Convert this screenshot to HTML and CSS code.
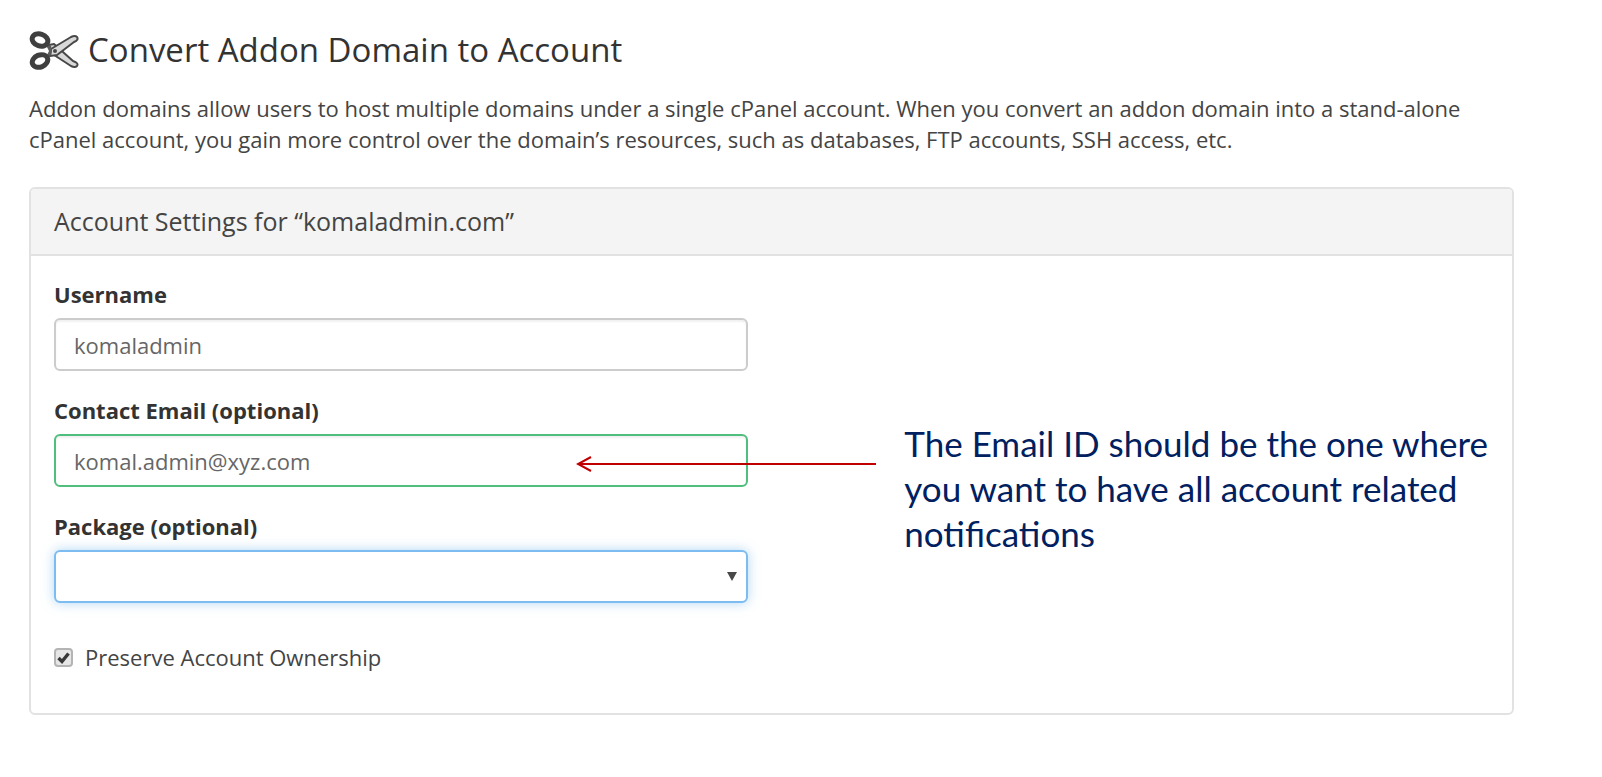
FILE: index.html
```html
<!DOCTYPE html>
<html lang="en">
<head>
    <meta charset="UTF-8">
    <meta name="viewport" content="width=device-width, initial-scale=1.0">
    <title>Convert Addon Domain to Account</title>
    <link rel="stylesheet" href="styles.css">
</head>
<body>

    <div class="page">
        <h1>
            <svg class="scissors" viewBox="0 0 50 42" aria-hidden="true">
                <path d="M20 16 L25 15 L44 32 Q50 34 48 37 Q46 39 42 37 L22 24 Z" fill="#d8d8d8" stroke="#484848" stroke-width="2" stroke-linejoin="round"/>
                <path d="M21 27 L22 20 L42 8 Q46 6 48 8 Q50 11 45 13 L28 26 Z" fill="#d8d8d8" stroke="#484848" stroke-width="2" stroke-linejoin="round"/>
                <path d="M17 16 L22 17 L23 22 L22 26 L17 28 L20 22 Z" fill="#5c5c5c"/>
                <ellipse cx="11" cy="11" rx="8" ry="6" transform="rotate(18 11 11)" fill="none" stroke="#3f3f3f" stroke-width="5"/>
                <ellipse cx="11" cy="32" rx="8" ry="6" transform="rotate(-22 11 32)" fill="none" stroke="#3f3f3f" stroke-width="5"/>
                <circle cx="26" cy="22" r="2" fill="#484848"/>
            </svg>
            Convert Addon Domain to Account
        </h1>
        <p class="description">Addon domains allow users to host multiple domains under a single cPanel account. When you convert an addon domain into a stand-alone cPanel account, you gain more control over the domain’s resources, such as databases, FTP accounts, SSH access, etc.</p>

        <div class="panel">
            <h2 class="panel-heading">Account Settings for “komaladmin.com”</h2>
            <div class="panel-body">
                <form>
                    <div class="form-group">
                        <label for="username">Username</label>
                        <input type="text" id="username" class="form-control" value="komaladmin">
                    </div>
                    <div class="form-group">
                        <label for="email">Contact Email (optional)</label>
                        <input type="text" id="email" class="form-control valid" value="komal.admin@xyz.com">
                    </div>
                    <div class="form-group">
                        <label for="package">Package (optional)</label>
                        <select id="package" class="form-control active">
                            <option value=""></option>
                        </select>
                    </div>
                    <div class="checkbox">
                        <input type="checkbox" id="preserve" checked>
                        <label for="preserve">Preserve Account Ownership</label>
                    </div>
                </form>

                <div class="note">
                    <svg class="arrow" viewBox="0 0 300 18" aria-hidden="true">
                        <path d="M2 9 H300 M15 2 L2 9 L15 16" fill="none" stroke="#c00000" stroke-width="2"/>
                    </svg>
                    The Email ID should be the one where you want to have all account related notifications
                </div>
            </div>
        </div>
    </div>

</body>
</html>
```

FILE: styles.css
```css
* {
    margin: 0;
    padding: 0;
    box-sizing: border-box;
}

body {
    font-family: 'Open Sans', sans-serif;
    font-size: 22px;
    line-height: 31px;
    color: #444;
    background-color: #fff;
}

.page {
    padding: 28px 88px 28px 29px;
}

h1 {
    display: flex;
    align-items: center;
    gap: 9px;
    font-size: 33px;
    font-weight: normal;
    line-height: 44px;
    color: #333;
}

.scissors {
    width: 50px;
    height: 42px;
}

.description {
    margin: 21px 0 32px;
}

.panel {
    border: 2px solid #e2e2e2;
    border-radius: 6px;
}

.panel-heading {
    padding: 16px 23px;
    background-color: #f4f4f4;
    border-bottom: 2px solid #e2e2e2;
    border-radius: 4px 4px 0 0;
    font-size: 25px;
    font-weight: normal;
    line-height: 33px;
}

.panel-body {
    display: grid;
    grid-template-columns: 19fr 16fr;
    align-items: center;
    gap: 156px;
    padding: 23px 23px 40px;
}

.form-group {
    margin-bottom: 24px;
}

.form-group label {
    display: block;
    margin-bottom: 8px;
    font-weight: bold;
    color: #333;
}

.form-control {
    display: block;
    width: 100%;
    height: 53px;
    padding: 0 18px;
    border: 2px solid #ccc;
    border-radius: 6px;
    background-color: #fff;
    box-shadow: inset 0 2px 2px rgba(0, 0, 0, 0.06);
    font-family: inherit;
    font-size: 22px;
    color: #666;
    outline: none;
}

.form-control.valid {
    border-color: #50be7d;
}

.form-control.active {
    border-color: #7dbcf0;
    box-shadow: 0 0 12px rgba(102, 175, 233, 0.5);
}

select.form-control {
    appearance: none;
    background-image: url("data:image/svg+xml,%3Csvg xmlns='http://www.w3.org/2000/svg' viewBox='0 0 10 10'%3E%3Cpath d='M0 0H10L5 9Z' fill='%23484848'/%3E%3C/svg%3E");
    background-repeat: no-repeat;
    background-position: right 9px center;
    background-size: 10px 10px;
}

.checkbox {
    display: flex;
    align-items: center;
    gap: 12px;
    margin-top: 39px;
}

.checkbox input {
    appearance: none;
    width: 19px;
    height: 19px;
    border: 2px solid #b4b4b4;
    border-radius: 4px;
    background: #e6e6e6 url("data:image/svg+xml,%3Csvg xmlns='http://www.w3.org/2000/svg' viewBox='0 0 15 15'%3E%3Cpath d='M2.5 8L6 11.5L12.5 3.5' fill='none' stroke='%23383838' stroke-width='3.4'/%3E%3C/svg%3E") center / 15px no-repeat;
}

.note {
    position: relative;
    margin-top: 24px;
    font-family: Lato, sans-serif;
    font-size: 35px;
    line-height: 45px;
    color: #002060;
}

/* points from the note back into the email field */
.arrow {
    position: absolute;
    right: calc(100% + 28px);
    top: 34px;
    width: 300px;
    height: 18px;
}
```
